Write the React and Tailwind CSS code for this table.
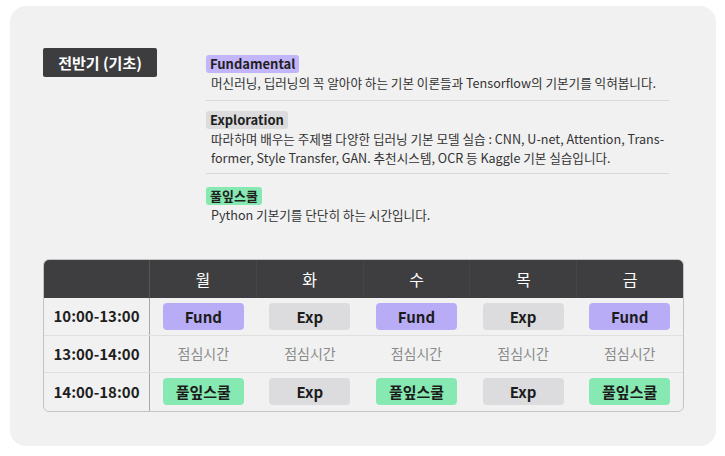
const days = ["월", "화", "수", "목", "금"];

const chipStyles = {
  Fund: "bg-[#b9acf6]",
  Exp: "bg-[#dcdcde]",
  풀잎스쿨: "bg-[#86e9b1]",
};

const rows = [
  { time: "10:00-13:00", items: ["Fund", "Exp", "Fund", "Exp", "Fund"] },
  { time: "13:00-14:00", items: null },
  { time: "14:00-18:00", items: ["풀잎스쿨", "Exp", "풀잎스쿨", "Exp", "풀잎스쿨"] },
];

const Chip = ({ label }) => (
  <div
    className={`w-[81px] h-[27px] rounded-[4px] flex items-center justify-center text-[15px] leading-none font-bold text-[#1c1c1c] ${chipStyles[label]}`}
  >
    {label}
  </div>
);

const Section = ({ tag, tagClass, children, className }) => (
  <div className={className}>
    <div
      className={`w-fit h-[18px] leading-[18px] px-[4px] rounded-[3px] text-[13px] font-bold text-[#1f1f1f] ${tagClass}`}
    >
      {tag}
    </div>
    <p className="pl-[5px] text-[12.6px] leading-[19.5px] text-[#333]">{children}</p>
  </div>
);

export default function App() {
  return (
    <div
      className="bg-white w-[725px] h-[456px] pt-[6px] pl-[10px]"
      style={{ fontFamily: '"Noto Sans CJK KR", "Noto Sans", sans-serif' }}
    >
      <div className="w-[706px] h-[440px] bg-[#f1f1f1] rounded-[16px] pt-[42px] pl-[33px] pr-[32px]">
        <div className="flex">
          <div className="w-[163px] shrink-0">
            <div className="w-[114px] h-[29px] bg-[#3d3d3f] rounded-[2px] flex items-center justify-center text-white text-[15px] leading-none font-bold">
              전반기 (기초)
            </div>
          </div>
          <div className="w-[463px]">
            <Section
              tag="Fundamental"
              tagClass="bg-[#c3b5fa]"
              className="pt-[7px] pb-[7px] border-b border-[#d9d9d9]"
            >
              머신러닝, 딥러닝의 꼭 알아야 하는 기본 이론들과 Tensorflow의 기본기를 익혀봅니다.
            </Section>
            <Section
              tag="Exploration"
              tagClass="bg-[#dcdcde]"
              className="pt-[10px] pb-[5px] border-b border-[#d9d9d9]"
            >
              따라하며 배우는 주제별 다양한 딥러닝 기본 모델 실습 : CNN, U-net, Attention, Trans-
              <br />
              former, Style Transfer, GAN. 추천시스템, OCR 등 Kaggle 기본 실습입니다.
            </Section>
            <Section tag="풀잎스쿨" tagClass="bg-[#86e9b1]" className="pt-[13px]">
              Python 기본기를 단단히 하는 시간입니다.
            </Section>
          </div>
        </div>

        <div className="mt-[35px] w-[641px] rounded-[6px] border border-[#c4c4c4] overflow-hidden">
          <div className="flex h-[38px] bg-[#3e3e40] text-white">
            <div className="w-[106px] border-r border-[#555]" />
            {days.map((d, i) => (
              <div
                key={d}
                className={`flex-1 flex items-center justify-center text-[16px] ${i < 4 ? "border-r border-[#454547]" : ""}`}
              >
                {d}
              </div>
            ))}
          </div>
          {rows.map((row, ri) => (
            <div
              key={row.time}
              className={`flex h-[37.5px] ${ri < 2 ? "border-b border-[#e0e0e0]" : ""}`}
            >
              <div className="w-[106px] border-r border-[#a8a8a8] flex items-center justify-center text-[15px] font-bold text-[#1e1e1e]">
                {row.time}
              </div>
              {days.map((d, i) => (
                <div key={d} className="flex-1 flex items-center justify-center">
                  {row.items ? (
                    <Chip label={row.items[i]} />
                  ) : (
                    <span className="text-[14px] text-[#8a8a8a]">점심시간</span>
                  )}
                </div>
              ))}
            </div>
          ))}
        </div>
      </div>
    </div>
  );
}
